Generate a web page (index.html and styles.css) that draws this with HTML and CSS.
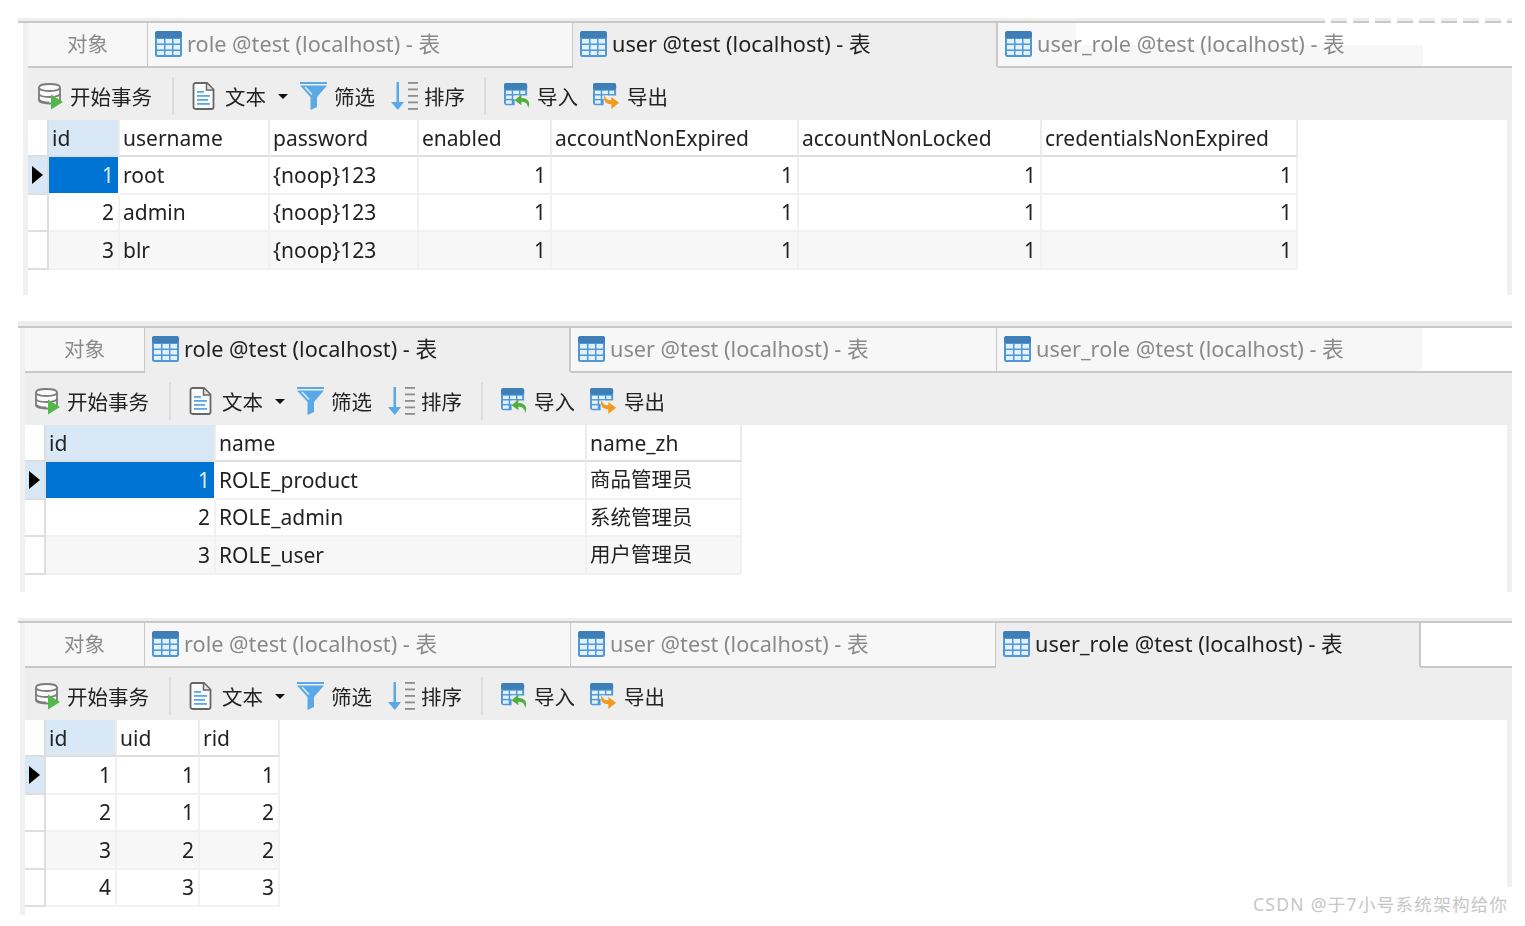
FILE: index.html
```html
<!DOCTYPE html>
<html lang="zh">
<head>
<meta charset="utf-8">
<title>Navicat tables</title>
<link rel="stylesheet" href="styles.css">
</head>
<body>
<svg class="defs" width="0" height="0">
  <symbol id="i-table" viewBox="0 0 27 26">
    <rect x="0" y="0" width="27" height="26" rx="2.5" fill="#4f97d6"/>
    <rect x="0" y="0" width="27" height="7" rx="2.5" fill="#3f7fb8"/>
    <g fill="#e3f1fd">
      <rect x="2" y="8" width="7" height="4.5"/><rect x="10.5" y="8" width="6.5" height="4.5"/><rect x="18.5" y="8" width="6.5" height="4.5"/>
      <rect x="2" y="14" width="7" height="4.5"/><rect x="10.5" y="14" width="6.5" height="4.5"/><rect x="18.5" y="14" width="6.5" height="4.5"/>
      <rect x="2" y="20" width="7" height="4"/><rect x="10.5" y="20" width="6.5" height="4"/><rect x="18.5" y="20" width="6.5" height="4"/>
    </g>
  </symbol>
  <symbol id="i-db" viewBox="0 0 25 27">
    <g fill="#fafafa" stroke="#7c7c7c" stroke-width="1.8">
      <path d="M1 4.5C1 2.3 5.5 1 11.5 1S22 2.300 22 4.500V17C22 19.500 17 20.500 11.500 20.500S1 19.500 1 17Z"/>
      <path d="M1 4.500C1 6.700 5.500 8 11.500 8S22 6.700 22 4.500" fill="none"/>
      <path d="M1 10.500C1 12.700 5.500 14 11.500 14S22 12.700 22 10.500" fill="none"/>
      <path d="M1 16C1 18 5.500 19.500 11 19.500" fill="none"/>
    </g>
    <path d="M13 11.500L25 19 13 26.500Z" fill="#52b848"/>
  </symbol>
  <symbol id="i-doc" viewBox="0 0 23 28">
    <path d="M1.500 3C1.500 1.800 2.300 1 3.500 1H15L21.500 7.500V25C21.500 26.200 20.700 27 19.500 27H3.500C2.300 27 1.500 26.200 1.500 25Z" fill="#fbfbfb" stroke="#666" stroke-width="1.800"/>
    <path d="M14.500 1.500V8H21" fill="#e8e8e8" stroke="#666" stroke-width="1.500"/>
    <g fill="#5aa9e6"><rect x="5" y="9" width="7" height="1.800"/><rect x="5" y="13" width="13" height="1.800"/><rect x="5" y="17" width="11" height="1.800"/><rect x="5" y="21" width="13" height="1.800"/></g>
  </symbol>
  <symbol id="i-filter" viewBox="0 0 27 28">
    <rect x="0" y="0" width="27" height="2" fill="#5aa9e6"/>
    <path d="M0 3.500H27L17 15V25L10.500 28V15Z" fill="#5aa9e6"/>
    <path d="M5 5L12 12.500" stroke="#d7ebfa" stroke-width="1.600" fill="none"/>
  </symbol>
  <symbol id="i-sort" viewBox="0 0 27 28">
    <path d="M5.500 0H8V20H13L6.800 28 0 20H5.500Z" fill="#5aa9e6"/>
    <g fill="#8d8d8d"><rect x="17" y="0" width="10" height="1.800"/><rect x="17" y="6.500" width="10" height="1.800"/><rect x="17" y="13" width="10" height="1.800"/><rect x="17" y="19.500" width="10" height="1.800"/><rect x="17" y="26" width="10" height="1.800"/></g>
  </symbol>
  <symbol id="i-import" viewBox="0 0 28 27">
    <rect x="0" y="0" width="24" height="23" rx="2.500" fill="#4f97d6"/>
    <rect x="0" y="0" width="24" height="7" rx="2.500" fill="#3f7fb8"/>
    <g fill="#e3f1fd"><rect x="2" y="8" width="6" height="3.500"/><rect x="9.500" y="8" width="6" height="3.500"/><rect x="17" y="8" width="5" height="3.500"/><rect x="2" y="13" width="6" height="3.500"/><rect x="9.500" y="13" width="6" height="3.500"/><rect x="2" y="18" width="6" height="3.500"/></g>
    <rect x="11" y="13" width="17" height="14" fill="#eee"/>
    <path d="M18 12L11 18 18 23V19.500C22 19.500 24.500 21 25 26 28 20 25 15.500 18 15.500Z" fill="#4fae3f"/>
  </symbol>
  <symbol id="i-export" viewBox="0 0 28 27">
    <rect x="0" y="0" width="24" height="23" rx="2.500" fill="#4f97d6"/>
    <rect x="0" y="0" width="24" height="7" rx="2.500" fill="#3f7fb8"/>
    <g fill="#e3f1fd"><rect x="2" y="8" width="6" height="3.500"/><rect x="9.500" y="8" width="6" height="3.500"/><rect x="17" y="8" width="5" height="3.500"/><rect x="2" y="13" width="6" height="3.500"/><rect x="9.500" y="13" width="6" height="3.500"/><rect x="2" y="18" width="6" height="3.500"/></g>
    <rect x="11" y="13" width="17" height="14" fill="#eee"/>
    <path d="M19 27L27 20.500 19 14.500V18C15 18 13 16.500 12 12.500 10 18 13 22 19 22Z" fill="#f09a1e"/>
  </symbol>
</svg>

<section class="panel p1">
  <div class="strip"></div>
  <div class="inner">
    <div class="tabs">
      <div class="tab obj"><span>对象</span></div>
      <div class="tab"><svg class="ti"><use href="#i-table"/></svg><span>role @test (localhost) - 表</span></div>
      <div class="tab active"><svg class="ti"><use href="#i-table"/></svg><span>user @test (localhost) - 表</span></div>
      <div class="tab patched"><svg class="ti"><use href="#i-table"/></svg><span>user_role @test (localhost) - 表</span></div>
      <div class="tabrest"></div>
    </div>
    <div class="toolbar">
      <div class="tool t-db"><svg class="ic-db"><use href="#i-db"/></svg>开始事务</div>
      <div class="sep"></div>
      <div class="tool t-doc"><svg class="ic-doc"><use href="#i-doc"/></svg>文本<i class="caret"></i></div>
      <div class="tool t-filter"><svg class="ic-f"><use href="#i-filter"/></svg>筛选</div>
      <div class="tool t-sort"><svg class="ic-f"><use href="#i-sort"/></svg>排序</div>
      <div class="sep"></div>
      <div class="tool t-imp"><svg class="ic-f"><use href="#i-import"/></svg>导入</div>
      <div class="tool"><svg class="ic-f"><use href="#i-export"/></svg>导出</div>
    </div>
    <div class="grid">
      <div class="row head">
        <div class="c ind"></div><div class="c sel-h">id</div><div class="c">username</div><div class="c">password</div><div class="c">enabled</div><div class="c">accountNonExpired</div><div class="c">accountNonLocked</div><div class="c">credentialsNonExpired</div>
      </div>
      <div class="row">
        <div class="c ind cur"><i class="arrow"></i></div><div class="c n picked">1</div><div class="c">root</div><div class="c">{noop}123</div><div class="c n">1</div><div class="c n">1</div><div class="c n">1</div><div class="c n">1</div>
      </div>
      <div class="row">
        <div class="c ind"></div><div class="c n">2</div><div class="c">admin</div><div class="c">{noop}123</div><div class="c n">1</div><div class="c n">1</div><div class="c n">1</div><div class="c n">1</div>
      </div>
      <div class="row alt">
        <div class="c ind"></div><div class="c n">3</div><div class="c">blr</div><div class="c">{noop}123</div><div class="c n">1</div><div class="c n">1</div><div class="c n">1</div><div class="c n">1</div>
      </div>
    </div>
  </div>
</section>

<section class="panel p2">
  <div class="strip"></div>
  <div class="inner">
    <div class="tabs">
      <div class="tab obj"><span>对象</span></div>
      <div class="tab active"><svg class="ti"><use href="#i-table"/></svg><span>role @test (localhost) - 表</span></div>
      <div class="tab"><svg class="ti"><use href="#i-table"/></svg><span>user @test (localhost) - 表</span></div>
      <div class="tab"><svg class="ti"><use href="#i-table"/></svg><span>user_role @test (localhost) - 表</span></div>
      <div class="tabrest"></div>
    </div>
    <div class="toolbar">
      <div class="tool t-db"><svg class="ic-db"><use href="#i-db"/></svg>开始事务</div>
      <div class="sep"></div>
      <div class="tool t-doc"><svg class="ic-doc"><use href="#i-doc"/></svg>文本<i class="caret"></i></div>
      <div class="tool t-filter"><svg class="ic-f"><use href="#i-filter"/></svg>筛选</div>
      <div class="tool t-sort"><svg class="ic-f"><use href="#i-sort"/></svg>排序</div>
      <div class="sep"></div>
      <div class="tool t-imp"><svg class="ic-f"><use href="#i-import"/></svg>导入</div>
      <div class="tool"><svg class="ic-f"><use href="#i-export"/></svg>导出</div>
    </div>
    <div class="grid">
      <div class="row head">
        <div class="c ind"></div><div class="c sel-h">id</div><div class="c">name</div><div class="c">name_zh</div>
      </div>
      <div class="row">
        <div class="c ind cur"><i class="arrow"></i></div><div class="c n picked">1</div><div class="c">ROLE_product</div><div class="c zh">商品管理员</div>
      </div>
      <div class="row">
        <div class="c ind"></div><div class="c n">2</div><div class="c">ROLE_admin</div><div class="c zh">系统管理员</div>
      </div>
      <div class="row alt">
        <div class="c ind"></div><div class="c n">3</div><div class="c">ROLE_user</div><div class="c zh">用户管理员</div>
      </div>
    </div>
  </div>
</section>

<section class="panel p3">
  <div class="strip"></div>
  <div class="inner">
    <div class="tabs">
      <div class="tab obj"><span>对象</span></div>
      <div class="tab"><svg class="ti"><use href="#i-table"/></svg><span>role @test (localhost) - 表</span></div>
      <div class="tab"><svg class="ti"><use href="#i-table"/></svg><span>user @test (localhost) - 表</span></div>
      <div class="tab active"><svg class="ti"><use href="#i-table"/></svg><span>user_role @test (localhost) - 表</span></div>
      <div class="tabrest"></div>
    </div>
    <div class="toolbar">
      <div class="tool t-db"><svg class="ic-db"><use href="#i-db"/></svg>开始事务</div>
      <div class="sep"></div>
      <div class="tool t-doc"><svg class="ic-doc"><use href="#i-doc"/></svg>文本<i class="caret"></i></div>
      <div class="tool t-filter"><svg class="ic-f"><use href="#i-filter"/></svg>筛选</div>
      <div class="tool t-sort"><svg class="ic-f"><use href="#i-sort"/></svg>排序</div>
      <div class="sep"></div>
      <div class="tool t-imp"><svg class="ic-f"><use href="#i-import"/></svg>导入</div>
      <div class="tool"><svg class="ic-f"><use href="#i-export"/></svg>导出</div>
    </div>
    <div class="grid">
      <div class="row head">
        <div class="c ind"></div><div class="c sel-h">id</div><div class="c">uid</div><div class="c">rid</div>
      </div>
      <div class="row">
        <div class="c ind cur"><i class="arrow"></i></div><div class="c n">1</div><div class="c n">1</div><div class="c n">1</div>
      </div>
      <div class="row">
        <div class="c ind"></div><div class="c n">2</div><div class="c n">1</div><div class="c n">2</div>
      </div>
      <div class="row alt">
        <div class="c ind"></div><div class="c n">3</div><div class="c n">2</div><div class="c n">2</div>
      </div>
      <div class="row">
        <div class="c ind"></div><div class="c n">4</div><div class="c n">3</div><div class="c n">3</div>
      </div>
    </div>
  </div>
</section>

<div class="mask-top"></div>
<div class="watermark">CSDN @于7小号系统架构给你</div>
</body>
</html>
```

FILE: styles.css
```css
html, body { margin: 0; padding: 0; background: #fff; overflow: hidden; }
body {
  position: relative;
  height: 926px;
  padding-top: 18px;
  box-sizing: border-box;
  font-family: "Noto Sans", "Noto Sans CJK SC", sans-serif;
  font-size: 21px;
  color: #222;
}
.defs { position: absolute; }

.panel { width: 1494px; margin-left: 18px; margin-bottom: 26px; filter: blur(0.45px); }
.p1 { --lead: 5px; height: 277px; }
.p2 { --lead: 2px; height: 271px; }
.p3 { --lead: 2px; height: 297px; }

.strip { height: 3px; background: #eee; border-bottom: 2px solid #c8c8c8; }
.p2 .strip { height: 5px; }

.inner {
  display: flex;
  flex-direction: column;
  height: calc(100% - 5px);
  margin-left: var(--lead);
  border-left: 5px solid #f0f0f0;
  box-sizing: border-box;
}
.p2 .inner { height: calc(100% - 7px); }

.tabs { display: flex; height: 45px; flex: none; }
.tab {
  display: flex;
  align-items: center;
  box-sizing: border-box;
  width: 425px;
  padding-left: 7px;
  background: #f7f7f7;
  border-right: 1px solid #c8c8c8;
  border-bottom: 2px solid #c8c8c8;
  color: #8a8a8a;
  white-space: nowrap;
  font-size: 21.700px;
}
.tab span { margin-top: -4px; }
.tab.obj { width: 120px; padding-left: 0; justify-content: center; font-size: 20.500px; }
.tab.active {
  background: #eee;
  color: #222;
  border-bottom-color: #eee;
  border-right: 2px solid #c8c8c8;
}
.tab.patched {
  background: linear-gradient(#fff, #fff) no-repeat right top / 347px 22px, #f7f7f7;
  border-right: 0;
}
.p2 .tab:nth-child(3), .p2 .tab.active, .p3 .tab:nth-child(2) { width: 426px; }
.p2 .tab:nth-child(4) { border-right: 0; }
.tabrest { flex: 1; background: #fff; border-bottom: 2px solid #c8c8c8; }
.ti { width: 27px; height: 26px; margin-top: -1px; margin-right: 5px; flex: none; }

.toolbar {
  display: flex;
  align-items: center;
  height: 52px;
  flex: none;
  padding-left: 10px;
  padding-top: 4px;
  box-sizing: border-box;
  background: #eee;
  font-size: 20.500px;
  color: #222;
}
.tool { display: flex; align-items: center; gap: 7px; white-space: nowrap; }
.ic-db { width: 25px; height: 27px; }
.ic-doc { width: 23px; height: 28px; margin-right: 2px; }
.ic-f { width: 27px; height: 28px; }
.sep { width: 2px; height: 38px; background: #dcdcdc; margin-right: 18px; }
.t-db { margin-right: 20px; }
.t-doc { margin-right: 12px; }
.t-doc .ic-doc { margin-right: 3px; }
.t-doc .caret { margin-left: 5px; }
.t-filter { margin-right: 16px; }
.t-sort { margin-right: 19px; gap: 6px; }
.t-imp { margin-right: 15px; gap: 6px; }
.caret {
  width: 0;
  height: 0;
  border: 5px solid transparent;
  border-top: 5px solid #111;
  border-bottom: 0;
}

.grid { flex: 1; background: #fff; border-right: 5px solid #f0f0f0; }
.row { display: grid; height: 37.500px; box-sizing: border-box; width: max-content; }
.row.head { height: 37px; }
.p1 .row { grid-template-columns: 21px 71px 150px 149px 133px 247px 243px 256px; }
.p2 .row { grid-template-columns: 21px 170px 371px 155px; }
.p3 .row { grid-template-columns: 21px 71px 83px 80px; }

.c {
  display: flex;
  align-items: center;
  box-sizing: border-box;
  padding-left: 3px;
  border-right: 2px solid #f1f1f1;
  border-bottom: 2px solid #f1f1f1;
  white-space: nowrap;
  min-width: 0;
  overflow: hidden;
}
.head .c { border-bottom-color: #dedede; border-right-color: #ececec; }
.c.n { justify-content: flex-end; padding: 0 4px 0 0; }
.c.zh { font-size: 20.500px; padding-bottom: 3px; }
.alt .c { background: #f7f7f7; }
.c.ind, .alt .c.ind { background: #fff; padding: 0; border-right-color: #dedede; border-bottom-color: #dedede; }
.c.ind.cur { background: #d8e8f6; justify-content: center; }
.c.sel-h { background: #d8e8f6; }
.c.picked { background: #0074d4; color: #dfeefb; border-color: #fff; }
.arrow {
  width: 0;
  height: 0;
  border-left: 11px solid #000;
  border-top: 9px solid transparent;
  border-bottom: 9px solid transparent;
}

.mask-top {
  position: absolute;
  left: 1325px;
  top: 18px;
  width: 187px;
  height: 5px;
  background: repeating-linear-gradient(90deg, #fff 0 6px, transparent 6px 22px);
}
.watermark {
  position: absolute;
  left: 1250px;
  top: 887px;
  width: 262px;
  height: 28px;
  box-sizing: border-box;
  padding: 7px 0 0 3px;
  background: #fff;
  font-size: 17.500px;
  line-height: 21px;
  letter-spacing: 1.300px;
  color: #c6c6c6;
  white-space: nowrap;
  overflow: hidden;
}
```
